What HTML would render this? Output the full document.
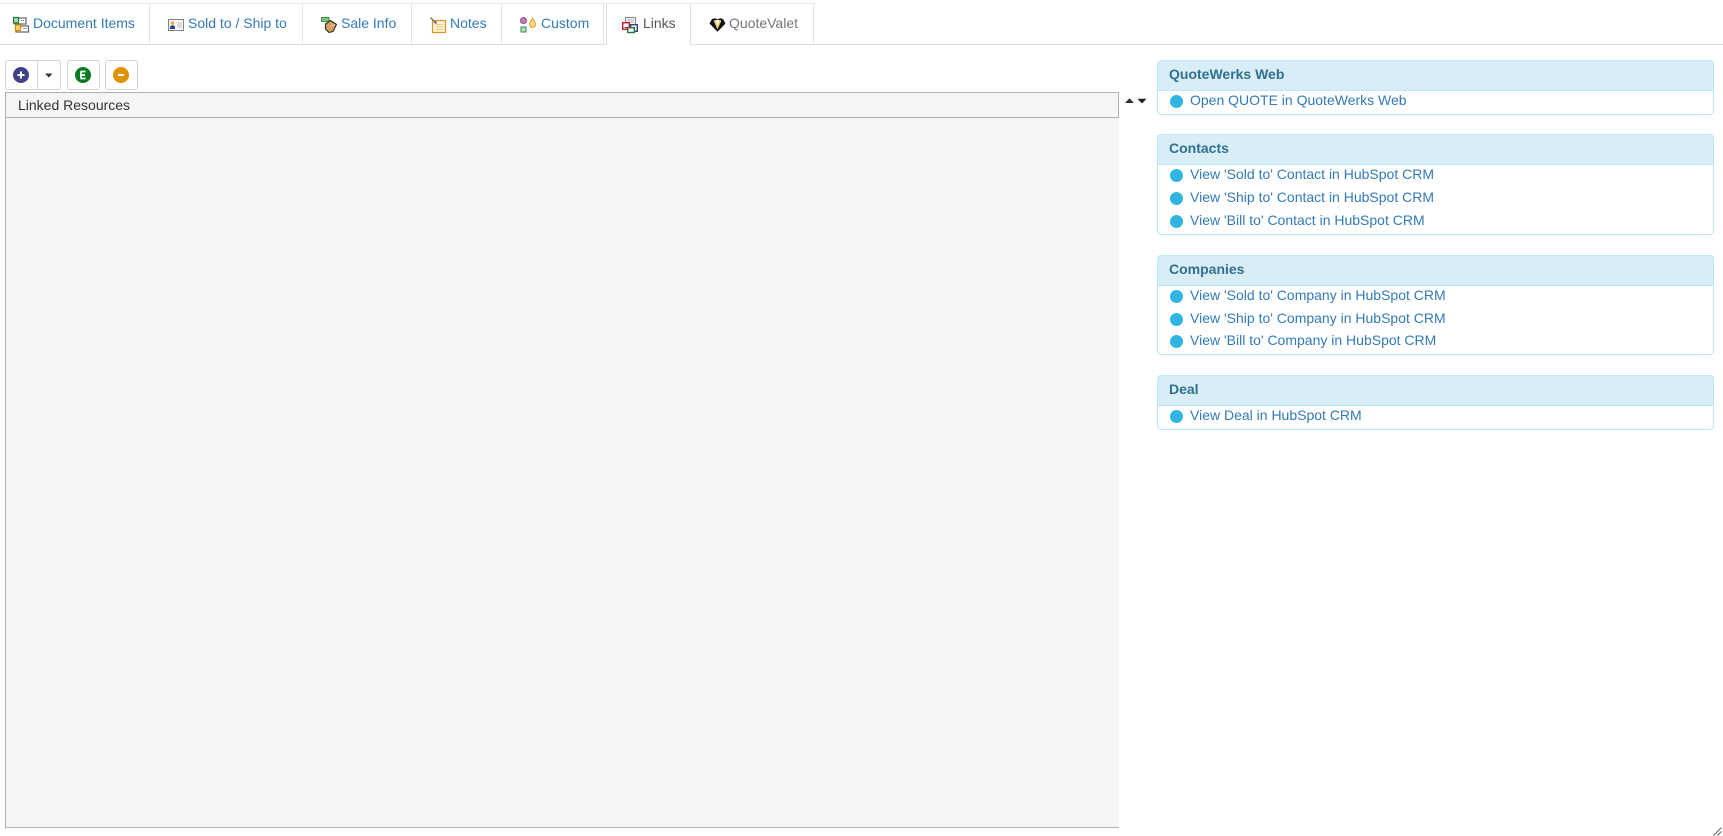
<!DOCTYPE html>
<html>
<head>
<meta charset="utf-8">
<style>
html,body{margin:0;padding:0;width:1723px;height:836px;overflow:hidden;background:#fff;font-family:"Liberation Sans",Arial,sans-serif;font-size:14px;color:#333}
.abs{position:absolute}
.t{position:absolute;top:15px;line-height:16px;color:#337ab7;white-space:nowrap}
.v{position:absolute;top:12px;width:1px;height:32px;background:#e4e4e4}
svg{position:absolute;overflow:visible}
.btn{position:absolute;top:60px;height:28px;border:1px solid #d2d2d2;border-radius:3px;background:#fff}
.panel{position:absolute;left:1157px;width:557px;border:1px solid #bce8f1;border-radius:4px;background:#fff;box-sizing:border-box}
.panel .h{height:30px;background:#d9edf7;border-bottom:1px solid #bce8f1;box-sizing:border-box;color:#31708f;font-weight:bold;line-height:26px;padding-left:11px;border-radius:3px 3px 0 0}
.r{position:absolute;left:32px;line-height:16px;color:#337ab7;white-space:nowrap}
.d{position:absolute;left:12px;width:13px;height:13px;border-radius:50%;background:#31b5e0}
</style>
</head>
<body>
<!-- tab strip -->
<div class="abs" style="left:0;top:3px;width:816px;height:1px;background:#e6e6e6"></div>
<div class="abs" style="left:0;top:44px;width:1723px;height:1px;background:#ddd"></div>
<div class="v" style="left:149px;top:4px;height:40px"></div>
<div class="v" style="left:302px;top:4px;height:40px"></div>
<div class="v" style="left:411px;top:4px;height:40px"></div>
<div class="v" style="left:501px;top:4px;height:40px"></div>
<div class="v" style="left:603px;top:4px;height:40px"></div>
<div class="abs" style="left:606px;top:4px;width:85px;height:41px;background:#fff;border-left:1px solid #ddd;border-right:1px solid #ddd;box-sizing:border-box"></div>
<div class="v" style="left:813px;top:4px;height:40px"></div>

<!-- Document Items icon -->
<svg style="left:13px;top:17px" width="17" height="17" viewBox="0 0 17 17">
<rect x="1.500" y="1" width="11.500" height="6" fill="#fff" stroke="#707070" stroke-width="1.300"/>
<rect x="0.500" y="0.500" width="5" height="5.500" fill="#a9d8b0" stroke="#1f7a3a" stroke-width="1.200"/>
<rect x="3" y="9" width="12.500" height="6" fill="#fff" stroke="#707070" stroke-width="1.300"/>
<rect x="2.500" y="8" width="5" height="5.500" fill="#fbd56a" stroke="#d99000" stroke-width="1.200"/>
<path d="M8 3.500h3M10.500 11.500h3" stroke="#555" stroke-width="1" stroke-dasharray="1 1"/>
</svg>
<span class="t" style="left:33px">Document Items</span>

<!-- Sold to icon -->
<svg style="left:168px;top:19px" width="16" height="13" viewBox="0 0 16 13">
<rect x="0.500" y="0.500" width="15" height="11" fill="#f7f7f7" stroke="#808080"/>
<path d="M2 10V7.500L4.500 6L7 7.500V10Z" fill="#2d3f8f"/>
<circle cx="4.500" cy="4" r="1.800" fill="#e8b040"/>
<path d="M9 4h5M9 6h5M9 8h5" stroke="#c0c0c0"/>
</svg>
<span class="t" style="left:188px">Sold to / Ship to</span>

<!-- Sale Info icon -->
<svg style="left:321px;top:17px" width="17" height="17" viewBox="0 0 17 17">
<rect x="0.500" y="0.500" width="7.500" height="4" fill="#7cc07c" stroke="#3f8f4f"/>
<path d="M4.500 7L9.500 3.500L15.500 7.500L12 14.500L8 15.500L4.500 12Z" fill="#cf9f68" stroke="#3a2a18" stroke-linejoin="round" stroke-width="1.100"/>
<path d="M9 9.500l5-2" stroke="#e8c79c"/>
</svg>
<span class="t" style="left:341px">Sale Info</span>

<!-- Notes icon -->
<svg style="left:430px;top:17px" width="17" height="17" viewBox="0 0 17 17">
<rect x="2.500" y="3.500" width="13" height="12" fill="#fdf3d0" stroke="#d9932a" stroke-width="1.200"/>
<path d="M5.500 7.500h8M5.500 10h8M5.500 12.500h8" stroke="#eec98a"/>
<path d="M0.500 0.500L6 6" stroke="#777" stroke-width="1.500"/>
<rect x="4.500" y="4.500" width="2" height="2" fill="#2d3f8f"/>
</svg>
<span class="t" style="left:450px">Notes</span>

<!-- Custom icon -->
<svg style="left:519px;top:17px" width="18" height="17" viewBox="0 0 18 17">
<circle cx="4.500" cy="3.500" r="3" fill="#c87cb8" stroke="#8a4f88"/>
<rect x="2" y="10" width="5" height="5" fill="#b8e0bc" stroke="#2f8a4a"/>
<path d="M13.500 1C12.500 3.500 10.500 5 10.500 7.500a3 3 0 0 0 6 0C16.500 5 14.500 3.500 13.500 1Z" fill="#fbd98a" stroke="#d9a030"/>
</svg>
<span class="t" style="left:541px">Custom</span>

<!-- Links icon -->
<svg style="left:622px;top:17px" width="17" height="17" viewBox="0 0 17 17">
<rect x="3.500" y="0.500" width="10" height="10" fill="#fff" stroke="#888" stroke-width="1.200"/>
<path d="M5 3h7M5 5h7" stroke="#aaa"/>
<rect x="0.700" y="5.700" width="6.600" height="6.600" fill="#fff" stroke="#c4182c" stroke-width="1.400"/>
<path d="M2.500 10.500h3" stroke="#c4182c"/>
<rect x="8.700" y="7.700" width="6.600" height="6.600" fill="#fff" stroke="#2d3f8f" stroke-width="1.400"/>
<rect x="5.700" y="10.700" width="6.600" height="4.800" fill="#fff" stroke="#1f7a3a" stroke-width="1.400"/>
</svg>
<span class="t" style="left:643px;color:#555">Links</span>

<!-- QuoteValet icon -->
<svg style="left:709px;top:18px" width="17" height="14" viewBox="0 0 17 14">
<path d="M3 1L6 0.200L8.500 1.500L11 0.200L14 1L16.500 5.500L8.500 13.800L0.500 5.500Z" fill="#111"/>
<path d="M4.500 2.500L8.500 11.500L12.500 2.500L10 2H7Z" fill="#e9cf72"/>
<path d="M7 2.200L8.500 8.500L10 2.200Z" fill="#fff"/>
</svg>
<span class="t" style="left:729px;color:#777">QuoteValet</span>

<!-- toolbar -->
<div class="btn" style="left:5px;width:54px"></div>
<div class="abs" style="left:37px;top:61px;width:1px;height:28px;background:#d2d2d2"></div>
<div class="btn" style="left:67px;width:31px"></div>
<div class="btn" style="left:105px;width:31px"></div>
<svg style="left:13px;top:67px" width="16" height="16" viewBox="0 0 16 16">
<circle cx="8" cy="8" r="8" fill="#3f4488"/>
<path d="M8 4.500v7M4.500 8h7" stroke="#fff" stroke-width="2"/>
</svg>
<svg style="left:45px;top:73px" width="8" height="5" viewBox="0 0 8 5"><path d="M0 0.500h7.500L3.800 4.500Z" fill="#333"/></svg>
<svg style="left:75px;top:67px" width="16" height="16" viewBox="0 0 16 16">
<circle cx="8" cy="8" r="8" fill="#0b7a24"/>
<path d="M5.500 4.500h5M5.500 8h4.500M5.500 11.500h5M6 4.500v7" stroke="#fff" stroke-width="1.700" fill="none"/>
</svg>
<svg style="left:113px;top:67px" width="16" height="16" viewBox="0 0 16 16">
<circle cx="8" cy="8" r="8" fill="#e09300"/>
<path d="M5 8h6" stroke="#fff" stroke-width="2"/>
</svg>

<!-- grid -->
<div class="abs" style="left:5px;top:92px;width:1114px;height:736px;background:#f5f5f5;border-left:1px solid #b0b0b0;border-bottom:1px solid #b0b0b0;border-top:1px solid #b0b0b0;box-sizing:border-box"></div>
<div class="abs" style="left:5px;top:92px;width:1114px;height:26px;border:1px solid #b0b0b0;box-sizing:border-box;background:#f5f5f5;line-height:24px;padding-left:12px;color:#333">Linked Resources</div>
<svg style="left:1125px;top:98px" width="22" height="6" viewBox="0 0 22 6">
<path d="M0 5L4.500 0.300L9 5Z" fill="#333"/>
<path d="M12.500 0.800H21.500L17 5.500Z" fill="#222"/>
</svg>

<!-- panels -->
<div class="panel" style="top:60px;height:55px">
<div class="h">QuoteWerks Web</div>
<span class="d" style="top:34px"></span><span class="r" style="top:31px">Open QUOTE in QuoteWerks Web</span>
</div>
<div class="panel" style="top:134px;height:101px">
<div class="h">Contacts</div>
<span class="d" style="top:34px"></span><span class="r" style="top:31px">View 'Sold to' Contact in HubSpot CRM</span>
<span class="d" style="top:57px"></span><span class="r" style="top:54px">View 'Ship to' Contact in HubSpot CRM</span>
<span class="d" style="top:80px"></span><span class="r" style="top:77px">View 'Bill to' Contact in HubSpot CRM</span>
</div>
<div class="panel" style="top:255px;height:100px">
<div class="h">Companies</div>
<span class="d" style="top:34px"></span><span class="r" style="top:31px">View 'Sold to' Company in HubSpot CRM</span>
<span class="d" style="top:57px"></span><span class="r" style="top:54px">View 'Ship to' Company in HubSpot CRM</span>
<span class="d" style="top:79px"></span><span class="r" style="top:76px">View 'Bill to' Company in HubSpot CRM</span>
</div>
<div class="panel" style="top:375px;height:55px">
<div class="h">Deal</div>
<span class="d" style="top:34px"></span><span class="r" style="top:31px">View Deal in HubSpot CRM</span>
</div>

<!-- resize grip -->
<svg style="left:1713px;top:827px" width="9" height="9" viewBox="0 0 9 9">
<path d="M0.500 8.500L8.500 0.500M4.500 8.500L8.500 4.500" stroke="#666" stroke-width="1"/>
</svg>
</body>
</html>
